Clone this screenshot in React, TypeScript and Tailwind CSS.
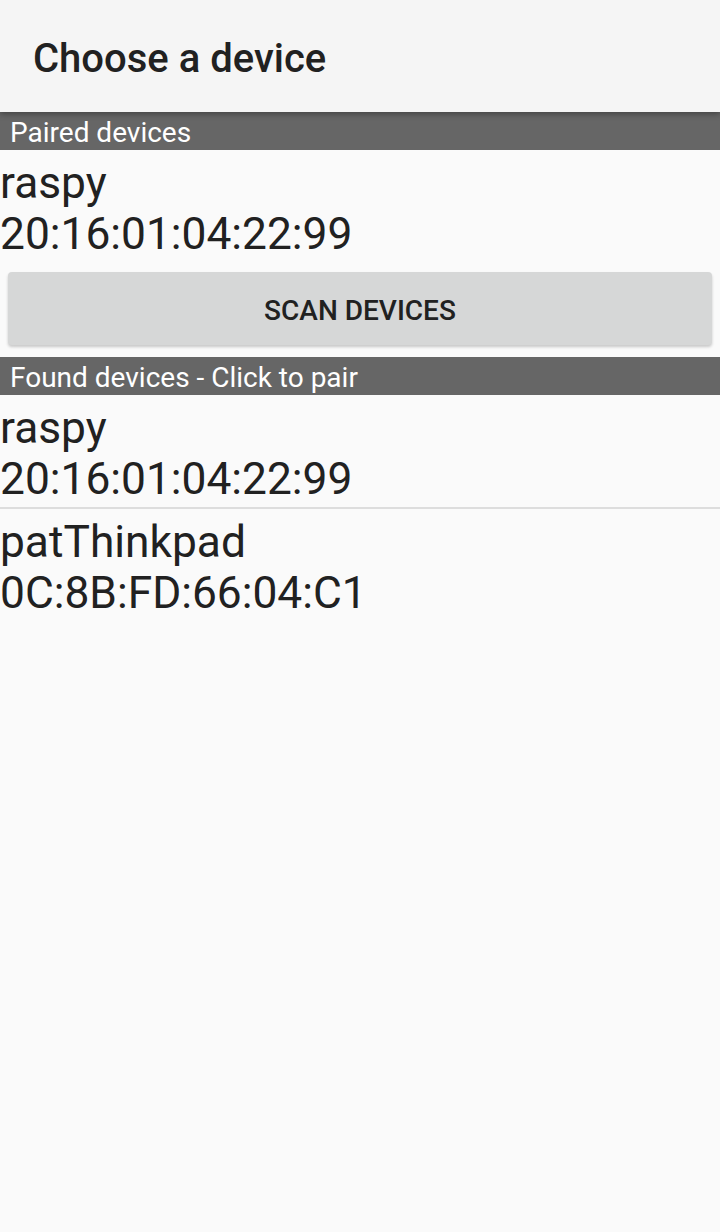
const paired = [{ name: "raspy", mac: "20:16:01:04:22:99" }];
const found = [
  { name: "raspy", mac: "20:16:01:04:22:99" },
  { name: "patThinkpad", mac: "0C:8B:FD:66:04:C1" },
];

const SectionHeader = ({ title }: { title: string }) => (
  <div className="h-[38px] bg-[#666666] pl-[10px] pt-[3px] text-[28px] leading-[35px] text-white">
    {title}
  </div>
);

const DeviceRow = ({ name, mac }: { name: string; mac: string }) => (
  <div className="h-[112px] text-[44.3px] leading-[51px] text-[#212121] pt-[8px]">
    <div>{name}</div>
    <div>{mac}</div>
  </div>
);

export default function App() {
  return (
    <div
      className="w-[720px] h-[1232px] bg-[#fafafa] overflow-hidden"
      style={{ fontFamily: "Roboto, 'Liberation Sans', sans-serif" }}
    >
      <div className="relative z-10 h-[112px] bg-[#f5f5f5] flex items-center pl-[33px] pt-[6px] shadow-[0_2px_6px_rgba(0,0,0,0.35)]">
        <h1 className="text-[40px] font-medium text-[#212121]">Choose a device</h1>
      </div>
      <SectionHeader title="Paired devices" />
      {paired.map((d) => (
        <DeviceRow key={d.mac} {...d} />
      ))}
      <div className="px-[8px] pt-[10px] pb-[12px]">
        <button className="w-full h-[73px] pt-[5px] rounded-[4px] bg-[#d6d7d7] text-[28px] font-medium text-[#212121] shadow-[0_2px_3px_rgba(0,0,0,0.2)]">
          SCAN DEVICES
        </button>
      </div>
      <SectionHeader title="Found devices - Click to pair" />
      {found.map((d, i) => (
        <div key={d.mac} className={i > 0 ? "border-t-2 border-[#dddddd]" : ""}>
          <DeviceRow {...d} />
        </div>
      ))}
    </div>
  );
}
